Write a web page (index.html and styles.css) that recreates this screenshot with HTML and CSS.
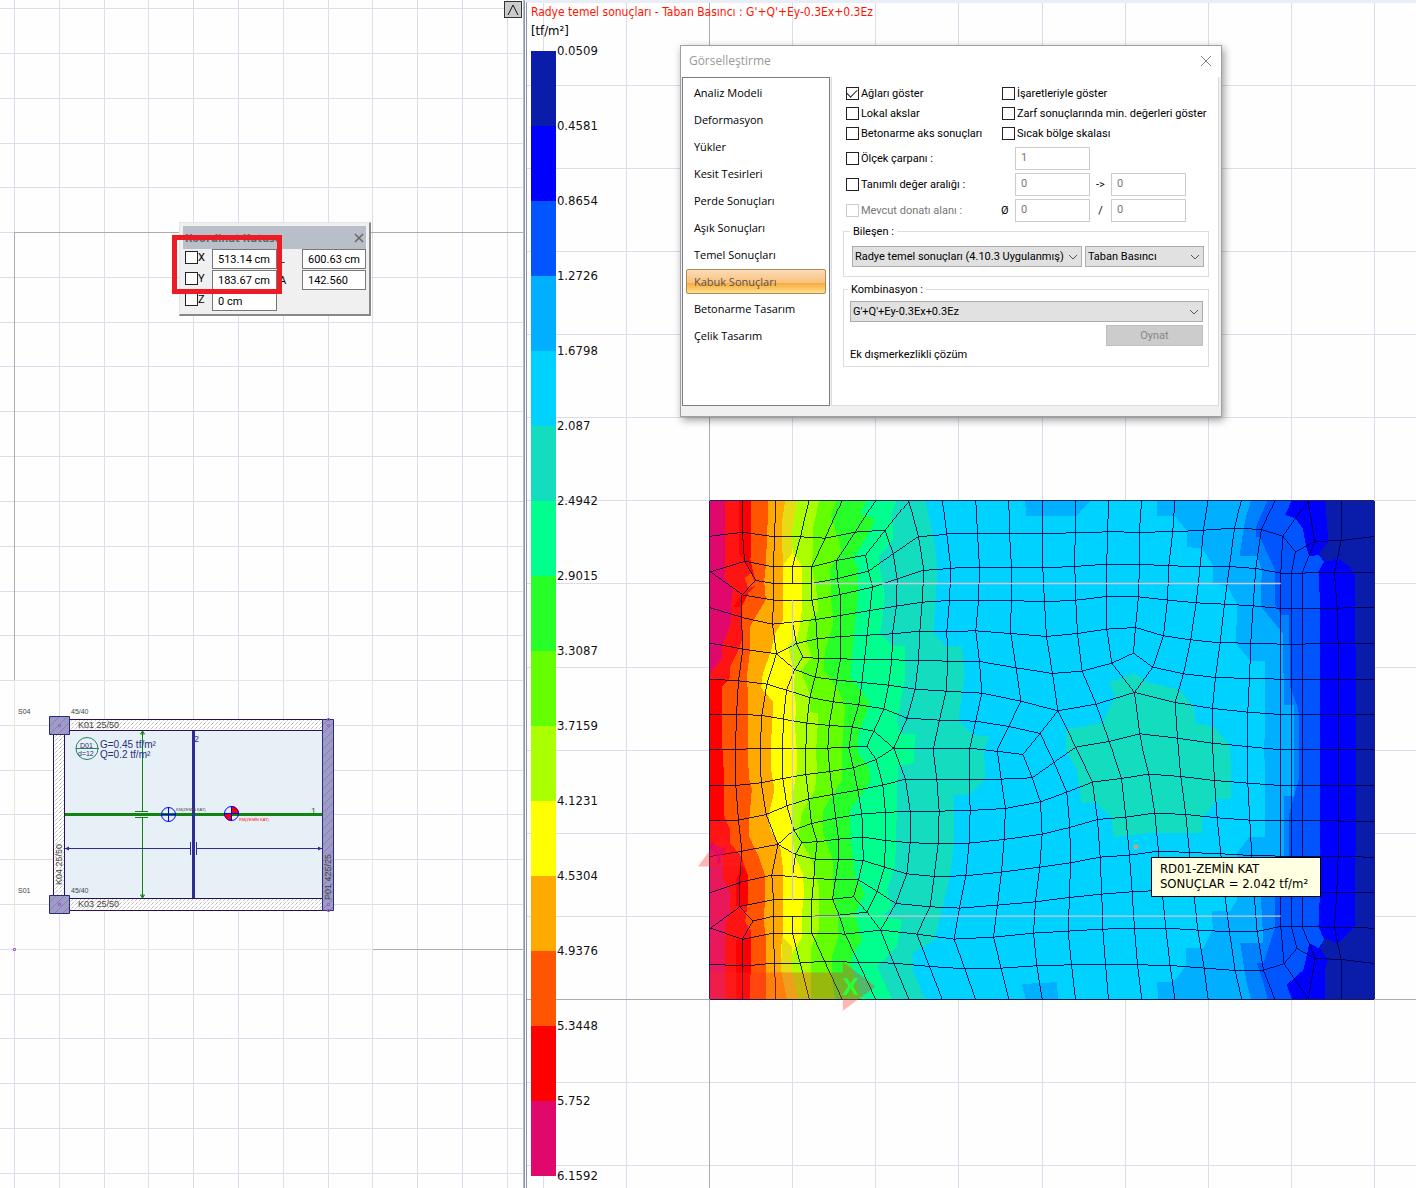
FILE: index.html
```html
<!DOCTYPE html>
<html lang="tr">
<head>
    <meta charset="UTF-8">
    <meta name="viewport" content="width=device-width, initial-scale=1.0">
    <title>Radye temel sonuçları</title>
    <link rel="stylesheet" href="styles.css">
</head>
<body>

    <main class="workspace">

        <!-- Plan view -->
        <section class="pane plan-pane" aria-label="Plan">
            <svg class="canvas" xmlns="http://www.w3.org/2000/svg">
                <defs>
                    <pattern id="hatch" width="4" height="4" patternUnits="userSpaceOnUse">
                        <path d="M0 4L4 0" stroke="#a0a0a0" stroke-width="1" stroke-dasharray="1 1"/>
                    </pattern>
                    <pattern id="hatchDark" width="8" height="8" patternUnits="userSpaceOnUse">
                        <path d="M0 8L8 0" stroke="#8683a8" stroke-width="1"/>
                    </pattern>
                </defs>

                <g class="lines" transform="translate(.5 .5)">
                    <path class="grid" d="M59 -1V3000M104 -1V3000M148 -1V3000M193 -1V3000M238 -1V3000M283 -1V3000M328 -1V3000M372 -1V3000M417 -1V3000M462 -1V3000M507 -1V3000M14 -1V3000"/>
                    <path class="grid" d="M-1 8H2000M-1 53H2000M-1 98H2000M-1 143H2000M-1 187H2000M-1 232H2000M-1 277H2000M-1 322H2000M-1 366H2000M-1 411H2000M-1 456H2000M-1 501H2000M-1 546H2000M-1 591H2000M-1 635H2000M-1 680H2000M-1 725H2000M-1 770H2000M-1 814H2000M-1 859H2000M-1 904H2000M-1 949H2000M-1 994H2000M-1 1038H2000M-1 1083H2000M-1 1128H2000M-1 1173H2000"/>
                    <path class="axis" d="M14 680V232H2000M372 949H2000"/>
                    <path class="limit" d="M14 680H372V949H14Z"/>
                </g>

                <!-- Slab and beams -->
                <rect x="64" y="730" width="259" height="169" fill="#e8f0f7"/>
                <path d="M69 719H323V731H69ZM69 898H323V911H69ZM53 734H65V896H53Z" fill="#fff"/>
                <g class="beam">
                    <path d="M69.500 719.500H322.500V730.500H69.500Z"/>
                    <path d="M69.500 898.500H322.500V910.500H69.500Z"/>
                    <path d="M53.500 734.500H64.500V895.500H53.500Z"/>
                </g>

                <g class="column">
                    <path d="M49.500 716.500H69.500V734.500H49.500Z"/>
                    <path d="M49.500 895.500H69.500V913.500H49.500Z"/>
                    <path d="M322.500 719.500H333.500V910.500H322.500Z"/>
                </g>
                <g class="column-hatch">
                    <path d="M50 717H69V734H50Z"/>
                    <path d="M50 896H69V913H50Z"/>
                    <path d="M323 720H333V910H323Z"/>
                </g>

                <!-- Slab strips -->
                <path d="M65 814.500H322" stroke="#128212" stroke-width="3"/>
                <path d="M193.500 731V898" stroke="#2d2d96" stroke-width="3"/>
                <path d="M142.500 732V811.500M135 811.500H148M135 817.500H148M142.500 817.500V897M140.500 734L142.500 731L144.500 734ZM140.500 895L142.500 898L144.500 895Z" fill="none" stroke="#128212"/>
                <path d="M65 848.500H190.500M190.500 842V855M196.500 842V855M196.500 848.500H322" stroke="#2d2d96"/>
                <path d="M65 848.500L69 846.500V850.500ZM322 848.500L318 846.500V850.500Z" fill="#2d2d96"/>

                <!-- Mass and rigidity centres -->
                <path d="M231.500 806V814H239A7.500 7.500 0 0 0 231.500 806ZM231.500 821V814H224A7.500 7.500 0 0 0 231.500 821Z" fill="#ff0000"/>
                <g fill="none" stroke="#0000ff">
                    <circle cx="168.500" cy="814.500" r="7"/>
                    <path d="M161 814.500H176M168.500 807V822"/>
                    <circle cx="231.500" cy="813.500" r="7"/>
                    <path d="M224 813.500H239M231.500 806V821"/>
                </g>
                <circle cx="87" cy="748.500" r="11" fill="none" stroke="#2a8060"/>
                <path d="M76 748.500H99" stroke="#2a8060"/>

                <g fill="none" stroke="#9a5cc8">
                    <path d="M58.500 724.500h2v2h-2zM327.500 724.500h2v2h-2zM327.500 718.500h2v2h-2zM58.500 903.500h2v2h-2zM327.500 903.500h2v2h-2zM327.500 909.500h2v2h-2zM13.500 948.500h2v2h-2z"/>
                </g>

                <g class="plan-text">
                    <text class="small" x="18" y="714">S04</text>
                    <text class="small" x="71" y="714">45/40</text>
                    <text class="small" x="18" y="893">S01</text>
                    <text class="small" x="71" y="893">45/40</text>
                    <text x="78" y="728">K01 25/50</text>
                    <text x="78" y="907">K03 25/50</text>
                    <text transform="translate(62 885) rotate(-90)">K04 25/50</text>
                    <text transform="translate(331 900) rotate(-90)">P01 425/25</text>
                    <text class="small blue" x="80" y="748">D01</text>
                    <text class="small blue" x="78" y="756">d=12</text>
                    <text class="load blue" x="100" y="748">G=0.45 tf/m²</text>
                    <text class="load blue" x="100" y="758">Q=0.2 tf/m²</text>
                    <text class="blue" x="194" y="742">2</text>
                    <text x="311" y="814" fill="#128212">1</text>
                    <text class="tiny" x="176" y="811">KM(ZEMİN KAT)</text>
                    <text class="tiny red" x="239" y="821">RM(ZEMİN KAT)</text>
                </g>
            </svg>

            <button class="pane-toggle" type="button" aria-label="Daralt">
                <svg width="12" height="12" viewBox="0 0 12 12"><path d="M1 11L6 1L11 11" fill="none" stroke="#111"/></svg>
            </button>

            <!-- Coordinate box -->
            <form class="coord-box">
                <header>
                    <h2>Koordinat Kutusu</h2>
                    <button type="button" aria-label="Kapat">
                        <svg width="10" height="10" viewBox="0 0 10 10"><path d="M1 1L9 9M9 1L1 9" stroke="#666" stroke-width="1.500"/></svg>
                    </button>
                </header>
                <div class="coord-grid">
                    <label class="check"><input type="checkbox">X</label>
                    <input type="text" value="513.14 cm" aria-label="X">
                    <label for="coordL">L</label>
                    <input type="text" id="coordL" value="600.63 cm">
                    <label class="check"><input type="checkbox">Y</label>
                    <input type="text" value="183.67 cm" aria-label="Y">
                    <label for="coordA">A</label>
                    <input type="text" id="coordA" value="142.560">
                    <label class="check"><input type="checkbox">Z</label>
                    <input type="text" class="locked" value="0 cm" aria-label="Z" readonly>
                </div>
            </form>
            <div class="highlight"></div>
        </section>

        <!-- Result view -->
        <section class="pane result-pane" aria-label="Sonuçlar">
            <svg class="canvas" xmlns="http://www.w3.org/2000/svg">
                <g transform="translate(-527 0)">
                    <g class="lines" transform="translate(.5 .5)">
                        <path class="grid" d="M543 0V3000M626 0V3000M792 0V3000M875 0V3000M958 0V3000M1042 0V3000M1125 0V3000M1208 0V3000M1291 0V3000M1374 0V3000"/>
                        <path class="grid" d="M526 85H4000M526 168H4000M526 251H4000M526 334H4000M526 417H4000M526 500H4000M526 583H4000M526 667H4000M526 750H4000M526 833H4000M526 916H4000M526 1082H4000M526 1165H4000"/>
                        <path class="axis" d="M709 0V3000M526 999H4000"/>
                    </g>

                    <!-- Soil pressure map, drawn at three units per pixel -->
                    <g transform="translate(709.500 500.500) scale(.3333)">
                        <g class="bands" shape-rendering="crispEdges">
                            <rect width="1995" height="1496" fill="#e0096b"/>
                            <polygon fill="#ff1414" points="47,0 45,230 70,270 64,318 64,365 38,440 38,475 0,520 0,1023 40,1045 42,1140 62,1175 62,1240 46,1270 46,1496 1995,1496 1995,0"/>
                            <polygon fill="#e8185a" points="0,1060 40,1065 42,1140 62,1175 62,1240 46,1270 46,1496 0,1496"/>
                            <path fill="#ff0000" d="M89 0H125V178L135 230L120 210L105 182L89 158ZM72 318L97 283L120 278L97 320ZM0 536L60 541L39 748L45 848L45 961H0ZM97 1090L117 1128L115 1218H80L80 1140ZM80 1320L125 1310V1496H80Z"/>
                            <polygon fill="#ff5500" points="125,0 123,178 135,230 138,255 117,278 97,318 97,418 87,450 62,500 60,535 39,558 39,748 45,848 45,948 62,988 62,1028 95,1068 117,1128 115,1208 107,1263 125,1293 122,1496 1995,1496 1995,0"/>
                            <polygon fill="#ff5500" points="105,233 125,218 138,255 117,263"/>
                            <polygon fill="#ffaa00" points="177,0 169,198 164,243 169,298 145,338 122,378 122,448 112,528 117,608 115,748 118,830 127,868 119,958 119,1008 147,1068 165,1118 167,1198 162,1258 169,1308 171,1496 1995,1496 1995,0"/>
                            <polygon fill="#ffff00" points="227,0 217,68 222,198 221,290 220,360 196,400 185,450 160,520 155,562 192,605 185,718 185,808 195,868 177,948 182,988 212,1038 222,1118 222,1288 215,1338 215,1408 232,1496 1995,1496 1995,0"/>
                            <path fill="#e6dc14" d="M227 0L217 68L220 195L249 158L247 108L262 0ZM218 1308L249 1338V1408L265 1496H232L215 1408Z"/>
                            <polygon fill="#aaff00" points="262,0 245,108 250,155 277,198 277,333 265,408 237,438 242,468 257,513 252,568 259,608 257,688 262,748 262,808 247,898 247,998 257,1068 279,1118 285,1178 277,1238 279,1308 249,1358 249,1418 265,1496 1995,1496 1995,0"/>
                            <polygon fill="#64ff00" points="329,0 312,78 312,128 307,200 318,248 327,330 300,360 290,420 307,470 275,510 300,580 302,635 327,638 320,748 322,808 317,868 277,938 267,1008 307,1078 329,1168 329,1288 305,1338 305,1496 1995,1496 1995,0"/>
                            <polygon fill="#28ff28" points="382,0 364,48 392,128 394,153 362,208 365,298 372,368 347,448 342,508 387,568 407,618 397,748 397,838 342,928 342,998 369,1078 372,1188 385,1248 387,1308 367,1368 369,1448 377,1496 1995,1496 1995,0"/>
                            <polygon fill="#00ff8c" points="472,0 452,38 497,58 472,108 432,173 447,208 447,268 437,368 422,528 482,608 447,698 447,760 477,798 482,843 422,928 422,1008 437,1128 465,1178 437,1238 457,1318 427,1368 425,1398 457,1496 1995,1496 1995,0"/>
                            <polygon fill="#14dcbe" points="562,0 547,38 552,118 507,168 517,238 527,288 512,398 547,436 587,436 585,548 562,658 572,700 619,700 612,788 565,798 562,928 557,1098 532,1168 547,1218 517,1248 577,1258 562,1338 502,1398 547,1496 1995,1496 1995,0"/>
                            <polygon fill="#00d2ff" points="649,0 655,35 672,108 684,208 677,308 672,398 712,438 757,436 766,528 747,658 792,703 840,708 824,748 827,838 782,881 732,885 734,1018 722,1128 692,1248 677,1318 612,1358 609,1408 647,1496 1995,1496 1995,0"/>
                            <polygon fill="#14dcbe" points="1275,518 1199,545 1217,588 1177,668 1070,686 1070,750 1102,808 1117,911 1157,903 1207,953 1212,1010 1337,996 1480,998 1477,958 1522,896 1565,896 1565,808 1562,735 1512,678 1459,668 1452,618 1407,566 1312,545"/>
                            <path fill="#00afff" d="M947 0L950 48H1099L1144 0ZM937 1451L1042 1445L1046 1496H949Z"/>
                            <polygon fill="#00afff" points="1344,0 1344,48 1397,48 1434,93 1434,140 1477,143 1512,196 1512,248 1554,258 1584,313 1579,428 1622,481 1667,481 1665,748 1667,1010 1620,1010 1582,1058 1582,1200 1562,1233 1507,1233 1510,1288 1482,1343 1429,1343 1429,1398 1392,1443 1342,1445 1347,1496 1995,1496 1995,0"/>
                            <polygon fill="#0082ff" points="1625,0 1607,58 1590,165 1644,168 1657,208 1654,318 1720,398 1724,613 1754,613 1754,886 1724,886 1724,1068 1652,1150 1662,1328 1592,1328 1612,1448 1625,1496 1995,1496 1995,0"/>
                            <polygon fill="#0055ff" points="1674,0 1640,78 1640,108 1652,113 1697,208 1697,313 1717,344 1739,344 1742,558 1767,628 1770,748 1770,828 1740,938 1740,1070 1698,1168 1698,1278 1662,1388 1642,1388 1662,1448 1674,1496 1995,1496 1995,0"/>
                            <polygon fill="#0000ff" points="1747,0 1727,43 1757,53 1780,83 1790,138 1800,168 1827,163 1844,183 1827,213 1832,308 1832,1168 1827,1278 1844,1318 1827,1343 1800,1328 1782,1408 1732,1453 1747,1496 1995,1496 1995,0"/>
                            <polygon fill="#0a1caa" points="1847,0 1857,123 1829,158 1847,183 1867,181 1884,171 1917,196 1937,223 1940,748 1937,1278 1902,1313 1884,1328 1845,1313 1832,1343 1855,1378 1847,1408 1847,1496 1995,1496 1995,0"/>
                        </g>

                        <!-- Mesh, rows -->
                        <g class="mesh">
                            <path d="M0 0H1995V1496H0Z"/>
                            <path d="M0 107L99 95L195 109H273L347 113L437 95L527 89L598 0"/>
                            <path d="M0 214L105 182L192 199H307L381 180L468 164L527 89M0 214L97 283L139 240L105 182"/>
                            <path d="M139 240L192 249H307L384 234L477 212L551 160L627 108L677 105L712 100L804 98H900L1000 99L1096 97L1194 94L1290 95L1390 94L1482 89L1575 83L1656 87L1720 107L1758 154L1816 123L1895 120L1995 108"/>
                            <path d="M97 283L192 299H307L392 282L489 260L563 235L643 209L677 208L724 203L810 200H906L1000 202L1096 198L1192 191H1290L1378 196L1472 198H1560L1639 204L1714 218L1875 217L1995 215"/>
                            <path d="M0 322L96 351L189 371L249 365L319 357L392 345L481 330L561 317L638 305L720 300L807 299L904 300L1005 304L1099 299L1192 288L1287 289L1377 299L1460 307L1545 311L1631 316L1714 324L1883 323L1995 320"/>
                            <path d="M0 428L100 446L201 460L261 429L323 415L393 408L473 404L549 400L631 392L712 393L799 391L904 399L1011 408L1104 399L1192 386L1278 381L1362 406L1444 418L1532 427L1624 428L1714 431L1885 430L1995 428"/>
                            <path d="M201 460L256 507L280 470L261 429M280 470L328 474L393 475L465 477L547 478L627 480L715 482L810 483L920 502L1029 519L1118 512L1207 488L1272 458L1330 500L1422 520L1518 531L1620 534L1714 536H1995"/>
                            <path d="M256 507L317 530L382 539L457 546L537 554L617 566L710 572L817 578L934 602L1045 631L1160 611L1275 576L1397 606L1509 624L1615 635L1714 642H1995M1207 488L1275 576"/>
                            <path d="M0 536L87 541L172 551L231 569L301 591L371 604L448 613L523 625L593 653L690 659L798 662L898 678L992 699L1045 631L1099 740L1199 723L1291 700L1404 713L1509 728L1612 738L1714 748H1995"/>
                            <path d="M0 641H81L157 645L222 656L292 668L359 675L428 679L493 692L553 743L677 745L780 743L867 753L940 762L992 699"/>
                            <path d="M0 747L152 745L357 743L417 740L472 737L500 777L553 743"/>
                            <path d="M0 856L79 855L155 847L220 834L289 822L361 813L432 802L500 777"/>
                            <path d="M0 961L87 959L170 942L232 916L298 895L370 882L445 869L520 854L588 836L682 837H780L875 836L968 832L1099 740"/>
                            <path d="M0 1068L97 1052L205 1032L253 989L306 969L379 953L457 940L528 936L602 932H689L782 930L888 924L993 904L1072 875L1149 845L1236 834L1318 821L1414 828L1515 840L1615 848L1714 855H1995"/>
                            <path d="M205 1032L258 1062L277 1026L253 989M277 1026L323 1024L387 1016L460 1010L528 1020L602 1027L686 1029L779 1028L884 1017L998 1001L1081 981L1164 957L1249 950L1336 938L1429 942L1523 952L1621 959L1714 961L1995 962"/>
                            <path d="M258 1062L317 1076H387L461 1080L525 1100L592 1120L674 1128L769 1126L876 1115L991 1100L1083 1087L1172 1070L1260 1064L1347 1052L1440 1056L1534 1060L1627 1065L1714 1067L1995 1070"/>
                            <path d="M0 1176L90 1146L187 1124L249 1128L313 1135L447 1138L503 1173L559 1209L662 1219L750 1223L864 1214L978 1204L1080 1191L1177 1181L1268 1174L1450 1165L1640 1175H1995"/>
                            <path d="M0 1283L90 1218L192 1198H307L369 1196L432 1189L473 1235M0 1283L98 1317L130 1262L90 1218"/>
                            <path d="M130 1262L192 1247H307L389 1244L473 1235L503 1173L525 1100"/>
                            <path d="M98 1317L192 1298H307L407 1301L513 1289L622 1301L734 1316L852 1310L972 1298L1075 1292L1180 1286L1275 1284L1369 1283L1465 1289L1560 1294L1643 1293L1714 1278H1779L1875 1281L1995 1283"/>
                            <path d="M0 1391L100 1397L195 1388H272L345 1382L447 1386L553 1388L660 1398L766 1405L875 1403L982 1396L1086 1393L1188 1391L1284 1393L1382 1395L1484 1403L1577 1410L1662 1409L1724 1390L1762 1344L1817 1374L1895 1377L1995 1389"/>
                        </g>

                        <!-- Mesh, columns -->
                        <g class="mesh">
                            <path d="M99 0V95L105 182M97 283L96 351L100 446L87 541L81 641L78 748L79 855L87 959L97 1052L90 1146V1218M98 1317L100 1397V1496"/>
                            <path d="M199 0L195 109L192 199V299L189 371L201 460L172 551L157 645L152 745L155 847L170 942L205 1032L187 1124L192 1198V1298L195 1388L199 1496"/>
                            <path d="M298 0L273 109L249 199V249M249 365L261 429M256 507L231 569L222 656L219 744L220 834L232 916L253 989M258 1062L249 1128M249 1247V1298L272 1388L299 1496"/>
                            <path d="M397 0L347 113L307 199V299L319 357L323 415L328 474L317 530L301 591L292 668L289 745V822L298 895L306 969L323 1024L317 1076L313 1135L307 1198V1298L345 1382L398 1496"/>
                            <path d="M497 0L437 95L381 180L384 234L392 282L393 475L382 539L371 604L359 675L355 743L361 813L370 882L379 953L387 1016V1076L369 1196L389 1244L407 1301L447 1386L498 1496"/>
                            <path d="M468 164L477 212L489 260L481 330L473 404L465 477L457 546L448 613L428 679L418 743L432 802L445 869L457 940L460 1010L461 1080L447 1138L432 1189"/>
                            <path d="M527 89L551 160L563 235L561 317L549 400L547 478L537 554L523 625L493 692L472 737M500 777L520 854L528 936V1020L525 1100"/>
                            <path d="M598 0L627 108L643 209L638 305L631 392L627 480L617 566L593 653L553 743L588 836L602 932V1027L592 1120L559 1209L513 1289L553 1388L598 1496M473 1235L513 1289"/>
                            <path d="M699 0L712 100L724 203L720 300L712 393L715 482L710 572L690 659L671 748L682 837L689 932L686 1029L674 1128L662 1219L622 1301L660 1398L698 1496"/>
                            <path d="M799 0L804 98L810 200L807 299L799 391L810 483L817 578L799 661L781 743L780 837L782 930L779 1028L769 1126L750 1223L734 1316L766 1405L798 1496"/>
                            <path d="M898 0L900 98L906 200L904 399L920 502L934 602L898 678L863 748L875 836L888 924L884 1017L876 1115L864 1214L852 1310L875 1403L898 1496"/>
                            <path d="M998 0L1000 202L1005 304L1011 408L1029 519L1045 631M940 762L968 832L993 904L998 1001L991 1100L978 1204L972 1298L982 1396L998 1496"/>
                            <path d="M992 699L1034 786L1072 875L1081 981L1083 1087L1080 1191L1076 1292L1086 1393L1098 1496"/>
                            <path d="M1099 740L1149 845L1164 957L1172 1070L1177 1181L1180 1286L1188 1391L1197 1496"/>
                            <path d="M1098 0L1096 198L1099 299L1104 399L1118 512L1160 611L1199 723L1208 748L1236 834L1249 950L1260 1064L1268 1174L1275 1284L1284 1393L1297 1496"/>
                            <path d="M1198 0L1194 94L1192 191V386L1207 488M1275 576L1291 700L1300 748L1318 821L1336 938L1347 1052L1358 1170L1369 1283L1382 1395L1396 1496"/>
                            <path d="M1296 0L1290 95V191L1287 289L1278 381L1272 458"/>
                            <path d="M1396 0L1390 94L1378 196L1374 299L1362 406L1330 500L1275 576"/>
                            <path d="M1495 0L1482 89L1472 198L1460 307L1444 418L1422 520L1397 606L1404 713L1414 828L1429 942L1440 1056L1452 1165L1465 1289L1484 1403L1496 1496"/>
                            <path d="M1595 0L1575 83L1560 198L1545 311L1532 427L1518 531L1509 624V728L1515 840L1523 952L1534 1060L1546 1180L1560 1294L1577 1410L1597 1496"/>
                            <path d="M1696 0L1656 87L1639 204L1631 316L1624 428L1620 534L1615 635L1614 738L1615 848L1621 959L1627 1065L1634 1180L1643 1293L1662 1409L1696 1496"/>
                            <path d="M1796 0L1720 107L1714 218V1278L1724 1390L1797 1496"/>
                            <path d="M1758 154L1746 218V1278L1762 1344"/>
                            <path d="M1796 0L1816 123L1778 218V1278L1817 1374L1797 1496"/>
                            <path d="M1896 0L1895 120L1875 217L1883 323L1886 430V1070L1882 1176L1875 1281L1895 1377L1896 1496"/>
                        </g>

                        <!-- Wall axes over the slab -->
                        <path class="wall" d="M249 299V1198M307 249H1714M307 1247H1714"/>

                        <!-- Axis arrows -->
                        <path d="M39 1000L-35 1098H112Z" fill="#ff2020" fill-opacity=".33"/>
                        <path d="M0 1416H400V1384L498 1458L400 1531V1496H0Z" fill="#ff2828" fill-opacity=".33"/>
                        <text class="axis-name" x="424" y="1484" fill="#28ff3c" text-anchor="middle">X</text>
                        <text class="axis-name" x="28" y="1090" fill="#e0096b" fill-opacity=".7" text-anchor="middle">Y</text>
                    </g>
                    <circle cx="1136" cy="847" r="2" fill="#ff8c28" stroke="#b4b4b4"/>
                </g>
            </svg>

            <div class="legend">
                <h1>Radye temel sonuçları - Taban Basıncı : G'+Q'+Ey-0.3Ex+0.3Ez</h1>
                <p>[tf/m²]</p>
                <ol class="scale">
                    <li class="c1"><span>0.0509</span></li>
                    <li class="c2"><span>0.4581</span></li>
                    <li class="c3"><span>0.8654</span></li>
                    <li class="c4"><span>1.2726</span></li>
                    <li class="c5"><span>1.6798</span></li>
                    <li class="c6"><span>2.087</span></li>
                    <li class="c7"><span>2.4942</span></li>
                    <li class="c8"><span>2.9015</span></li>
                    <li class="c9"><span>3.3087</span></li>
                    <li class="c10"><span>3.7159</span></li>
                    <li class="c11"><span>4.1231</span></li>
                    <li class="c12"><span>4.5304</span></li>
                    <li class="c13"><span>4.9376</span></li>
                    <li class="c14"><span>5.3448</span></li>
                    <li class="c15"><span>5.752</span></li>
                    <li class="end"><span>6.1592</span></li>
                </ol>
            </div>

            <div class="tip" role="tooltip">RD01-ZEMİN KAT<br>SONUÇLAR = 2.042 tf/m²</div>

            <!-- Visualisation dialog -->
            <div class="dialog" role="dialog" aria-labelledby="dialogTitle">
                <header>
                    <h2 id="dialogTitle">Görselleştirme</h2>
                    <button type="button" aria-label="Kapat">
                        <svg width="12" height="12" viewBox="0 0 12 12"><path d="M1 1L11 11M11 1L1 11" stroke="#888"/></svg>
                    </button>
                </header>
                <div class="dialog-body">
                    <nav>
                        <button type="button">Analiz Modeli</button>
                        <button type="button">Deformasyon</button>
                        <button type="button">Yükler</button>
                        <button type="button">Kesit Tesirleri</button>
                        <button type="button">Perde Sonuçları</button>
                        <button type="button">Aşık Sonuçları</button>
                        <button type="button">Temel Sonuçları</button>
                        <button type="button" class="active">Kabuk Sonuçları</button>
                        <button type="button">Betonarme Tasarım</button>
                        <button type="button">Çelik Tasarım</button>
                    </nav>
                    <form class="options">
                        <div class="checks">
                            <label class="check"><input type="checkbox" checked>Ağları göster</label>
                            <label class="check"><input type="checkbox">İşaretleriyle göster</label>
                            <label class="check"><input type="checkbox">Lokal akslar</label>
                            <label class="check"><input type="checkbox">Zarf sonuçlarında min. değerleri göster</label>
                            <label class="check"><input type="checkbox">Betonarme aks sonuçları</label>
                            <label class="check"><input type="checkbox">Sıcak bölge skalası</label>
                        </div>
                        <div class="params">
                            <label class="check"><input type="checkbox">Ölçek çarpanı :</label>
                            <span></span>
                            <input type="text" value="1" aria-label="Ölçek çarpanı" disabled>
                            <span></span>
                            <span></span>
                            <label class="check"><input type="checkbox">Tanımlı değer aralığı :</label>
                            <span></span>
                            <input type="text" value="0" aria-label="En küçük değer" disabled>
                            <span>-&gt;</span>
                            <input type="text" value="0" aria-label="En büyük değer" disabled>
                            <label class="check off"><input type="checkbox" disabled>Mevcut donatı alanı :</label>
                            <span>Ø</span>
                            <input type="text" value="0" aria-label="Donatı çapı" disabled>
                            <span>/</span>
                            <input type="text" value="0" aria-label="Donatı aralığı" disabled>
                        </div>
                        <fieldset class="component">
                            <legend>Bileşen :</legend>
                            <span class="select wide">
                                <select aria-label="Sonuç türü"><option>Radye temel sonuçları (4.10.3 Uygulanmış)</option></select>
                                <svg width="10" height="6" viewBox="0 0 10 6"><path d="M1 1L5 5L9 1" fill="none" stroke="#555"/></svg>
                            </span>
                            <span class="select">
                                <select aria-label="Bileşen"><option>Taban Basıncı</option></select>
                                <svg width="10" height="6" viewBox="0 0 10 6"><path d="M1 1L5 5L9 1" fill="none" stroke="#555"/></svg>
                            </span>
                        </fieldset>
                        <fieldset class="combination">
                            <legend>Kombinasyon :</legend>
                            <span class="select">
                                <select aria-label="Kombinasyon"><option>G'+Q'+Ey-0.3Ex+0.3Ez</option></select>
                                <svg width="10" height="6" viewBox="0 0 10 6"><path d="M1 1L5 5L9 1" fill="none" stroke="#555"/></svg>
                            </span>
                            <button type="button" class="play" disabled>Oynat</button>
                            <p>Ek dışmerkezlikli çözüm</p>
                        </fieldset>
                    </form>
                </div>
            </div>
        </section>

    </main>

</body>
</html>
```
FILE: styles.css
```css
/* General Reset */
* {
    margin: 0;
    padding: 0;
    box-sizing: border-box;
}

body {
    font-family: Roboto, Tahoma, sans-serif;
    font-size: 11px;
    line-height: 15px;
    color: #000;
    background-color: #fff;
}

button,
input,
select {
    font: inherit;
    color: inherit;
}

/* Panes */
.workspace {
    display: grid;
    grid-template-columns: 37% 1fr;
    min-height: 100vh;
}

.pane {
    position: relative;
    overflow: hidden;
    background-color: #fefefe;
}

.plan-pane {
    border-right: 1px solid #b4bace;
}

.result-pane {
    border-left: 3px double #8c93a8;
    border-top: 3px solid #e8edf6;
}

.canvas {
    position: absolute;
    top: 0;
    left: 0;
    width: 100%;
    height: 100%;
}

.result-pane .canvas {
    top: -3px;
    height: calc(100% + 3px);
}

.lines {
    fill: none;
    shape-rendering: crispEdges;
}

.grid {
    stroke: #dcdcea;
}

.axis {
    stroke: #acacac;
}

.limit {
    stroke: #efe4dc;
}

/* Plan drawing */
.beam {
    fill: url(#hatch);
    stroke: #2a1050;
}

.column {
    fill: #9f9bc8;
    stroke: #2a2a7a;
}

.column-hatch {
    fill: url(#hatchDark);
}

.plan-text {
    font-family: "Liberation Sans", Arial, sans-serif;
    font-size: 9px;
    fill: #444;
}

.plan-text .small {
    font-size: 7px;
}

.plan-text .load {
    font-size: 10px;
}

.plan-text .tiny {
    font-size: 4px;
}

.plan-text .blue {
    fill: #2d2d78;
}

.plan-text .red {
    fill: #ff0000;
}

.pane-toggle {
    position: relative;
    display: grid;
    place-items: center;
    width: 18px;
    height: 17px;
    margin: 1px 1px 0 auto;
    background-color: #ccc;
    border: 1px solid #333;
}

/* Check boxes */
.check {
    display: flex;
    align-items: center;
    gap: 2px;
    white-space: nowrap;
}

.check input {
    appearance: none;
    flex: none;
    display: grid;
    place-items: center;
    width: 13px;
    height: 13px;
    border: 1px solid #222;
    background-color: #fff;
}

.check input:checked::after {
    content: "";
    width: 9px;
    height: 5px;
    border-left: 1px solid #222;
    border-bottom: 1px solid #222;
    transform: translateY(-1px) rotate(-45deg);
}

.check.off {
    color: #777;
}

.check.off input {
    border-color: #ccc;
}

/* Coordinate box */
.coord-box {
    position: absolute;
    top: 222px;
    left: 179px;
    width: 192px;
    padding: 3px;
    background-color: #f0f0f0;
    border: 1px solid #dfe5ee;
    border-right: 2px solid #888;
    border-bottom: 2px solid #888;
}

.coord-box header {
    display: flex;
    align-items: center;
    justify-content: space-between;
    height: 23px;
    padding: 0 2px;
    background-color: #b9bfc9;
}

.coord-box h2 {
    font-family: "Open Sans", sans-serif;
    font-size: 11px;
    color: #666;
}

.coord-box header button,
.dialog header button {
    display: grid;
    border: 0;
    background: none;
}

.coord-grid {
    display: grid;
    grid-template-columns: 25px 65px 21px 64px;
    column-gap: 2px;
    row-gap: 1px;
    padding-left: 2px;
}

.coord-grid .check {
    gap: 0;
    padding-bottom: 4px;
}

.coord-grid label {
    align-self: center;
}

.coord-grid input[type="text"] {
    width: 100%;
    height: 20px;
    padding-left: 5px;
    border: 1px solid #777;
    background-color: #fff;
}

.coord-grid .locked {
    background-color: #f0f0f0;
}

.highlight {
    position: absolute;
    top: 235px;
    left: 172px;
    width: 110px;
    height: 59px;
    border: 5px solid #ed1c24;
}

/* Legend */
.legend {
    position: relative;
    padding-left: 4px;
    font-family: "DejaVu Sans Condensed", "DejaVu Sans", Tahoma, sans-serif;
    font-size: 13px;
    line-height: 18px;
}

.legend h1 {
    font-size: 12px;
    font-weight: normal;
    color: #ff1400;
}

.legend p {
    padding-top: 1px;
    padding-bottom: 11px;
}

.scale {
    list-style: none;
}

.scale li {
    display: flow-root;
    height: 75px;
    border-left: 25px solid;
}

.scale span {
    display: block;
    margin-top: -9px;
    padding-left: 1px;
    color: #111;
}

.scale .c1 { border-color: #0a1caa; }
.scale .c2 { border-color: #0000ff; }
.scale .c3 { border-color: #0055ff; }
.scale .c4 { border-color: #00afff; }
.scale .c5 { border-color: #00d2ff; }
.scale .c6 { border-color: #14dcbe; }
.scale .c7 { border-color: #00ff8c; }
.scale .c8 { border-color: #28ff28; }
.scale .c9 { border-color: #64ff00; }
.scale .c10 { border-color: #aaff00; }
.scale .c11 { border-color: #ffff00; }
.scale .c12 { border-color: #ffaa00; }
.scale .c13 { border-color: #ff5500; }
.scale .c14 { border-color: #ff0000; }
.scale .c15 { border-color: #e0096b; }

.scale .end {
    height: 12px;
    border-color: transparent;
}

/* Pressure map */
.mesh {
    fill: none;
    stroke: #000046;
    stroke-opacity: 0.85;
    stroke-width: 3;
    shape-rendering: crispEdges;
}

.wall {
    fill: none;
    stroke: #c8c8d2;
    stroke-width: 4;
}

.axis-name {
    font-family: "Liberation Sans", Arial, sans-serif;
    font-size: 72px;
    font-weight: bold;
}

.tip {
    position: absolute;
    top: 854px;
    left: 624px;
    width: 170px;
    padding: 3px 8px 5px;
    font-family: "DejaVu Sans Condensed", "DejaVu Sans", Tahoma, sans-serif;
    font-size: 13px;
    line-height: 15px;
    white-space: nowrap;
    background-color: #ffffe1;
    border: 1px solid #000;
}

/* Dialog */
.dialog {
    position: absolute;
    top: 42px;
    left: 153px;
    width: 542px;
    padding: 0 2px 10px 1px;
    background-color: #f0f0f0;
    border: 1px solid #a0a0a0;
    box-shadow: 2px 3px 8px rgba(0, 0, 0, 0.4);
}

.dialog header {
    display: flex;
    align-items: center;
    justify-content: space-between;
    height: 31px;
    margin: 0 -2px 0 -1px;
    padding: 0 9px 2px 8px;
    background-color: #fff;
}

.dialog h2 {
    font-family: "Open Sans", sans-serif;
    font-size: 12px;
    font-weight: normal;
    color: #999;
}

.dialog-body {
    display: flex;
    gap: 1px;
}

.dialog nav {
    display: flex;
    flex: none;
    flex-direction: column;
    gap: 2px;
    width: 148px;
    height: 329px;
    padding: 2px 3px;
    font-family: "Open Sans", sans-serif;
    background-color: #fff;
    border: 1px solid #7a7e8a;
}

.dialog nav button {
    height: 25px;
    padding: 0 7px;
    text-align: left;
    background: none;
    border: 1px solid transparent;
    border-radius: 2px;
}

.dialog nav .active {
    color: #555;
    background: linear-gradient(#fbdcb8, #fbc17c 55%, #f6a93a 56%, #fde08a);
    border-color: #a98a58;
}

.options {
    flex: 1;
    min-width: 0;
    padding: 6px 9px 0 11px;
    background-color: #fff;
    border: 1px solid #ddd;
    border-top: 0;
}

.checks {
    display: grid;
    grid-template-columns: 156px 1fr;
    padding-left: 3px;
}

.checks .check {
    height: 20px;
}

.params {
    display: grid;
    grid-template-columns: 149px 20px 75px 21px 75px;
    row-gap: 3px;
    align-items: center;
    padding: 4px 0 0 3px;
}

.params span {
    text-align: center;
}

.params input[type="text"] {
    height: 23px;
    width: 100%;
    padding: 0 5px 3px;
    color: #777;
    background-color: #fff;
    border: 1px solid #ccc;
}

.options fieldset {
    border: 1px solid #dcdcdc;
}

.options legend {
    height: 14px;
    margin-left: -2px;
    padding: 0 3px;
}

.component {
    display: flex;
    gap: 3px;
    margin-top: 2px;
    padding: 8px 4px 9px 8px;
}

.component .select {
    flex: 1;
}

.component .wide {
    flex: 0 0 230px;
}

.combination {
    display: flex;
    flex-direction: column;
    margin-top: 5px;
    padding: 5px 5px 4px 6px;
}

.select {
    position: relative;
    display: block;
}

.select select {
    appearance: none;
    display: block;
    width: 100%;
    height: 21px;
    padding-left: 2px;
    background-color: #e1e1e1;
    border: 1px solid #adadad;
}

.select svg {
    position: absolute;
    top: 8px;
    right: 4px;
    pointer-events: none;
}

.play {
    align-self: flex-end;
    width: 97px;
    height: 21px;
    margin-top: 3px;
    color: #888;
    background-color: #ccc;
    border: 1px solid #bfbfbf;
}

.combination p {
    margin-top: 1px;
}
```
